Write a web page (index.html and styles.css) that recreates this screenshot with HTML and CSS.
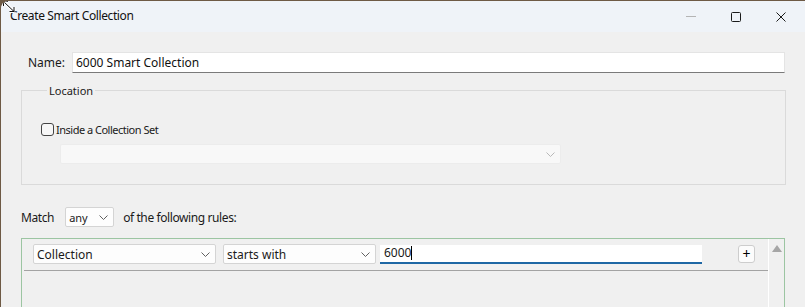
FILE: index.html
```html
<!DOCTYPE html>
<html lang="en">
<head>
    <meta charset="UTF-8">
    <title>Create Smart Collection</title>
    <link rel="stylesheet" href="styles.css">
</head>
<body>
    <div class="window">
        <!-- Barra de titulo -->
        <div class="titlebar">
            <span class="title">Create Smart Collection</span>
            <div class="caption-buttons">
                <span class="caption-btn">
                    <svg width="10" height="10" viewBox="0 0 10 10"><line x1="0" y1="4.5" x2="10" y2="4.5" stroke="#b4b4b4" stroke-width="1"/></svg>
                </span>
                <span class="caption-btn">
                    <svg width="10" height="10" viewBox="0 0 10 10"><rect x="0.5" y="0.5" width="9" height="9" rx="1" fill="none" stroke="#1a1a1a" stroke-width="1"/></svg>
                </span>
                <span class="caption-btn">
                    <svg width="10" height="10" viewBox="0 0 10 10"><path d="M0.5 0.5 L9.5 9.5 M9.5 0.5 L0.5 9.5" stroke="#1a1a1a" stroke-width="1"/></svg>
                </span>
            </div>
        </div>

        <div class="content">
            <div class="name-row">
                <label for="name">Name:</label>
                <input type="text" id="name" class="text-input" value="6000 Smart Collection">
            </div>

            <fieldset class="location">
                <legend>Location</legend>
                <label class="check-row">
                    <input type="checkbox" class="check">
                    <span>Inside a Collection Set</span>
                </label>
                <div class="select disabled set-select">
                    <span></span>
                    <svg class="chevron" width="9" height="5" viewBox="0 0 9 5"><polyline points="0.5,0.5 4.5,4.5 8.5,0.5" fill="none" stroke="#b8b8b8" stroke-width="1"/></svg>
                </div>
            </fieldset>

            <div class="match-row">
                <span>Match</span>
                <div class="select match-select">
                    <span>any</span>
                    <svg class="chevron" width="9" height="5" viewBox="0 0 9 5"><polyline points="0.5,0.5 4.5,4.5 8.5,0.5" fill="none" stroke="#606060" stroke-width="1"/></svg>
                </div>
                <span>of the following rules:</span>
            </div>

            <div class="rules">
                <div class="rules-list">
                    <div class="rule">
                        <div class="select field-select">
                            <span>Collection</span>
                            <svg class="chevron" width="9" height="5" viewBox="0 0 9 5"><polyline points="0.5,0.5 4.5,4.5 8.5,0.5" fill="none" stroke="#606060" stroke-width="1"/></svg>
                        </div>
                        <div class="select op-select">
                            <span>starts with</span>
                            <svg class="chevron" width="9" height="5" viewBox="0 0 9 5"><polyline points="0.5,0.5 4.5,4.5 8.5,0.5" fill="none" stroke="#606060" stroke-width="1"/></svg>
                        </div>
                        <div class="value-input"><span class="caret">6000</span></div>
                        <button class="add-btn">+</button>
                    </div>
                </div>
                <div class="scrollbar">
                    <svg width="10" height="7" viewBox="0 0 10 7"><polygon points="5,0 10,7 0,7" fill="#a6a6a6"/></svg>
                </div>
            </div>
        </div>

        <!-- cursor de redimension -->
        <svg class="resize-cursor" width="14" height="13" viewBox="0 0 14 13">
            <path d="M1.5 1.5 L12 11.5 M1.5 1.5 L1.5 6 M1.5 1.5 L6 1.5 M12 11.5 L7.5 11.5 M12 11.5 L12 7" stroke="#fff" stroke-width="3" fill="none"/>
            <path d="M1.5 1.5 L12 11.5 M1.5 1.5 L1.5 6 M1.5 1.5 L6 1.5 M12 11.5 L7.5 11.5 M12 11.5 L12 7" stroke="#111" stroke-width="1" fill="none"/>
        </svg>
    </div>
</body>
</html>
```

FILE: styles.css
```css
body {
    margin: 0;
    padding: 0;
    background-color: #6e5a45;
    font-family: 'Noto Sans', sans-serif;
    font-size: 12px;
    color: #1a1a1a;
    overflow: hidden;
}

.window {
    position: relative;
    margin-top: 1px;
    margin-left: 1px;
    height: 306px;
    background: #f0f0f0;
    border-top-left-radius: 8px;
    overflow: hidden;
}

/* Barra de titulo */
.titlebar {
    display: flex;
    align-items: center;
    justify-content: space-between;
    height: 31px;
    background: #eff3f8;
}

.title {
    padding-left: 9px;
    padding-bottom: 2px;
    font-size: 12px;
    letter-spacing: -0.4px;
    color: #111;
}

.caption-buttons {
    display: flex;
    height: 100%;
    padding-right: 2px;
}

.caption-btn {
    display: flex;
    align-items: center;
    justify-content: center;
    width: 45px;
    height: 100%;
    padding-bottom: 1px;
}

.resize-cursor {
    position: absolute;
    left: 1px;
    top: -1px;
}

/* Contenido */
.content {
    padding-top: 20px;
}

.name-row {
    display: flex;
    align-items: center;
    height: 21px;
    padding-left: 27px;
    padding-right: 20px;
}

.name-row label {
    width: 44px;
}

.text-input {
    flex: 1;
    height: 21px;
    box-sizing: border-box;
    border: 1px solid #e4e4e4;
    border-bottom-color: #7a7a7a;
    background: #ffffff;
    padding: 0 3px;
    font-family: 'Noto Sans', sans-serif;
    font-size: 12px;
    color: #111;
    outline: none;
}

/* Grupo de ubicacion */
.location {
    margin: 10px 19px 0 20px;
    padding: 0 0 20px 19px;
    border: 1px solid #dadada;
    min-width: 0;
}

.location legend {
    margin-left: 6px;
    padding: 0 2px;
    font-size: 11px;
    color: #1a1a1a;
}

.check-row {
    display: flex;
    align-items: center;
    gap: 2px;
    margin-top: 24px;
    font-size: 11px;
    letter-spacing: -0.5px;
}

.check {
    appearance: none;
    width: 13px;
    height: 13px;
    margin: 0;
    border: 1px solid #444;
    border-radius: 3px;
    background: #f7f7f7;
}

.select {
    display: flex;
    align-items: center;
    justify-content: space-between;
    height: 20px;
    box-sizing: border-box;
    border: 1px solid #d4d4d4;
    border-radius: 2px;
    background: #fdfdfd;
    padding: 0 5px 0 3px;
}

.select.disabled {
    background: #f8f8f8;
    border-color: #ececec;
}

.set-select {
    width: 501px;
    margin: 7px 0 0 19px;
}

/* Reglas */
.match-row {
    display: flex;
    align-items: center;
    gap: 11px;
    margin-top: 22px;
    padding-left: 20px;
    font-size: 12px;
    letter-spacing: -0.4px;
}

.match-select {
    width: 49px;
    font-size: 11px;
    letter-spacing: 0;
    margin-right: -2px;
}

.rules {
    display: flex;
    margin: 11px 20px 0 20px;
    height: 80px;
    border: 1px solid #9cc5a2;
    border-bottom: none;
}

.rules-list {
    flex: 1;
}

.rule {
    display: flex;
    align-items: center;
    margin-left: 2px;
    padding: 5px 11px 6px 9px;
    border-bottom: 1px solid #a3a3a3;
}

.field-select {
    width: 183px;
    margin-right: 7px;
}

.op-select {
    width: 153px;
    margin-right: 4px;
}

.value-input {
    display: flex;
    align-items: center;
    width: 322px;
    height: 19px;
    box-sizing: border-box;
    background: #ffffff;
    border-bottom: 2px solid #1e67a4;
    padding: 0 4px;
    margin-right: 36px;
}

.caret {
    border-right: 1px solid #000;
    line-height: 14px;
}

.add-btn {
    width: 17px;
    height: 18px;
    padding: 0;
    border: 1px solid #cdcdcd;
    border-radius: 3px;
    background: #fcfcfc;
    font-family: 'Noto Sans', sans-serif;
    font-size: 14px;
    line-height: 14px;
    color: #000;
}

.scrollbar {
    width: 16px;
    box-sizing: border-box;
    border-left: 1px solid #ffffff;
    display: flex;
    justify-content: center;
    padding-top: 6px;
}
```
